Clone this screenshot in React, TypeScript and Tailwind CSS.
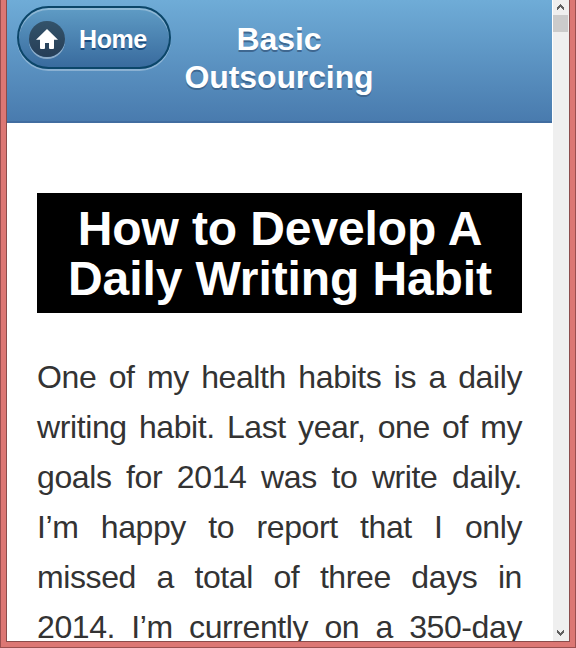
import React from "react";

const lines = [
  "One of my health habits is a daily",
  "writing habit. Last year, one of my",
  "goals for 2014 was to write daily.",
  "I’m happy to report that I only",
  "missed a total of three days in",
  "2014. I’m currently on a 350-day",
];

function HomeButton() {
  return (
    <a className="mt-[6px] ml-[10px] flex h-[63px] w-[154px] shrink-0 items-center rounded-full border-2 border-[#0b4669] bg-linear-to-b from-[#5f9cc5] to-[#396b9e] pt-[3px] pl-[10px] shadow-[inset_0_2px_0_rgba(255,255,255,0.3),0_2px_0_rgba(255,255,255,0.3)]">
      <span className="flex h-9 w-9 items-center justify-center rounded-full bg-linear-to-b from-[#33536a] to-[#263e57] shadow-[0_2px_0_rgba(255,255,255,0.4)]">
        <svg width="22" height="20" viewBox="0 0 22 20" fill="#fff">
          <path d="M11 0 22 10.7H18V19Q18 20 17 20H14Q13 20 13 19V14H9V19Q9 20 8 20H5Q4 20 4 19V10.7H0Z" />
        </svg>
      </span>
      <span className="ml-[14px] text-[25px] leading-[30px] font-bold tracking-[-0.4px] text-white [text-shadow:0_2px_0_#194b7e]">
        Home
      </span>
    </a>
  );
}

function Scrollbar() {
  return (
    <div className="ml-px flex h-[641px] w-4 shrink-0 flex-col bg-[#efefef]">
      <div className="flex h-[15px] items-start pt-1 pl-1">
        <svg width="7" height="6" viewBox="0 0 7 6" fill="#606060">
          <path d="M3 0h1v1h1v1h1v1h1v3h-1v-1h-1v-1h-1v-1h-1v1h-1v1h-1v1h-1v-3h1v-1h1v-1h1z" />
        </svg>
      </div>
      <div className="h-[17px] w-[15px] bg-[#cbcbcb]" />
      <div className="mt-auto flex h-[11px] items-start pl-1">
        <svg width="7" height="6" viewBox="0 0 7 6" fill="#606060">
          <path d="M0 0h1v1h1v1h1v1h1v-1h1v-1h1v-1h1v3h-1v1h-1v1h-1v1h-1v-1h-1v-1h-1v-1h-1z" />
        </svg>
      </div>
    </div>
  );
}

export default function App() {
  return (
    <div className="h-[648px] w-[576px] overflow-hidden border-x border-b border-[#9a4f4f] bg-[#dc7774] px-[5px] pb-[5px] font-['Liberation_Sans',Arial,sans-serif]">
      <div className="flex h-[642px] w-[564px] overflow-hidden border-x border-b border-[#8a4c4b] bg-white">
        <div className="h-[641px] w-[545px] shrink-0 overflow-hidden">
          <header className="flex h-[123px] items-start border-b-2 border-[#416da0] bg-linear-to-b from-[#6facd7] to-[#497bae]">
            <HomeButton />
            <h1 className="ml-[9px] w-[198px] pt-5 text-center text-[32px] leading-[38px] font-bold tracking-[-0.1px] text-white [text-shadow:0_2px_0_#3e6790]">
              Basic Outsourcing
            </h1>
          </header>
          <article className="px-[30px] pt-[70px]">
            <h2 className="h-[120px] bg-black pt-[11px] pl-px text-center text-[48px] leading-[50px] font-bold tracking-[-0.1px] text-white">
              How to Develop A<br />
              Daily Writing Habit
            </h2>
            <div className="pt-[39px] text-[32px] leading-[50px] tracking-[-0.4px] text-[#333]">
              {lines.map((line) => (
                <p key={line} className="whitespace-nowrap [text-align-last:justify]">
                  {line}
                </p>
              ))}
            </div>
          </article>
        </div>
        <Scrollbar />
      </div>
    </div>
  );
}
